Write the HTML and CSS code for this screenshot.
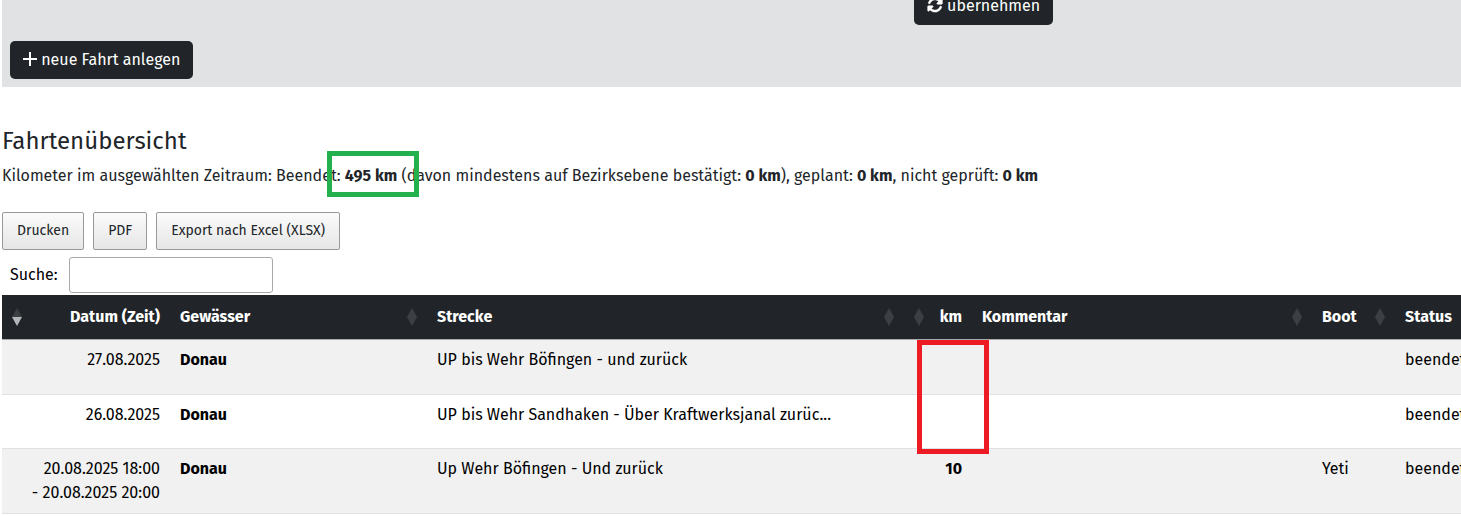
FILE: index.html
```html
<!DOCTYPE html>
<html lang="de">
<head>
	<meta charset="UTF-8">
	<title>Fahrtenübersicht</title>
	<link rel="stylesheet" href="styles.css">
</head>
<body>
<form class="filter" action="#">
	<div class="filter-row">
		<button type="submit" class="btn">
			<svg class="icon" viewBox="0 0 512 512" aria-hidden="true"><path d="M370 142a160 160 0 0 0-266 58 32 32 0 0 1-60-22A224 224 0 0 1 416 97l34-34c15-15 41-4 41 17v128c0 13-11 24-24 24H339c-21 0-32-26-17-41zM142 370a160 160 0 0 0 266-58 32 32 0 0 1 60 22A224 224 0 0 1 96 415l-34 34c-15 15-41 4-41-17V304c0-13 11-24 24-24h128c21 0 32 26 17 41z" stroke="currentColor" stroke-width="16"/></svg>
			übernehmen
		</button>
	</div>
	<div class="filter-new">
		<button type="button" class="btn">
			<svg class="icon icon-plus" viewBox="0 0 14 14" aria-hidden="true"><path d="M6 0h2v6h6v2H8v6H6V8H0V6h6z"/></svg>
			neue Fahrt anlegen
		</button>
	</div>
</form>

<main class="overview">
	<h2>Fahrtenübersicht</h2>
	<p class="summary">
		Kilometer im ausgewählten Zeitraum: Beendet: <b>495 km</b> (davon mindestens auf Bezirksebene bestätigt: <b>0 km</b>), geplant: <b>0 km</b>, nicht geprüft: <b>0 km</b>
		<span class="mark mark-green"></span>
	</p>

	<div class="tools">
		<button type="button">Drucken</button>
		<button type="button">PDF</button>
		<button type="button">Export nach Excel (XLSX)</button>
	</div>
	<div class="search">
		<label for="suche">Suche:</label>
		<input type="search" id="suche">
	</div>

	<table class="trips">
		<colgroup>
			<col class="c-date"><col class="c-water"><col><col class="c-km"><col class="c-comment"><col class="c-boat"><col class="c-status">
		</colgroup>
		<thead>
			<tr>
				<th class="right"><div class="sort"><i class="arrows desc"></i>Datum (Zeit)</div></th>
				<th><div class="sort">Gewässer<i class="arrows"></i></div></th>
				<th><div class="sort">Strecke<i class="arrows"></i></div></th>
				<th class="right"><div class="sort"><i class="arrows"></i>km</div></th>
				<th><div class="sort">Kommentar<i class="arrows"></i></div></th>
				<th><div class="sort">Boot<i class="arrows"></i></div></th>
				<th class="status">Status</th>
			</tr>
		</thead>
		<tbody>
			<tr>
				<td class="right">27.08.2025</td>
				<td><b>Donau</b></td>
				<td>UP bis Wehr Böfingen - und zurück</td>
				<td class="right km"><span class="mark mark-red"></span></td>
				<td></td>
				<td></td>
				<td class="status">beendet</td>
			</tr>
			<tr>
				<td class="right">26.08.2025</td>
				<td><b>Donau</b></td>
				<td>UP bis Wehr Sandhaken - Über Kraftwerksjanal zurüc...</td>
				<td class="right km"></td>
				<td></td>
				<td></td>
				<td class="status">beendet</td>
			</tr>
			<tr>
				<td class="right">20.08.2025 18:00<br>- 20.08.2025 20:00</td>
				<td><b>Donau</b></td>
				<td>Up Wehr Böfingen - Und zurück</td>
				<td class="right km"><b>10</b></td>
				<td></td>
				<td>Yeti</td>
				<td class="status">beendet</td>
			</tr>
		</tbody>
	</table>
</main>
</body>
</html>
```
FILE: styles.css
```css
* {
	box-sizing: border-box;
}
body {
	margin: 0 0 0 2px;
	font-family: "Fira Sans", Roboto, sans-serif;
	font-size: 16px;
	line-height: 24px;
	color: #212529;
	background: #fff;
	overflow: hidden;
}
button, input {
	font-family: inherit;
}

/* Filter */
.filter {
	margin-top: -13px;
	padding-bottom: 8px;
	background: #e1e2e4;
}
.filter-row {
	display: grid;
	grid-template-columns: 5fr 3fr;
	justify-items: start;
}
.filter-row .btn {
	grid-column: 2;
}
.filter-new {
	padding: 16px 8px 0;
}
.btn {
	height: 38px;
	padding: 0 13px;
	border: 0;
	border-radius: 5px;
	background: #212529;
	color: #fff;
	font-size: 16px;
	line-height: 24px;
	white-space: nowrap;
}
.icon {
	width: 16px;
	height: 16px;
	vertical-align: -2px;
	fill: currentColor;
}
.icon-plus {
	width: 14px;
	height: 14px;
	vertical-align: -1px;
}

/* Overview */
h2 {
	margin: 0;
	padding-top: 40px;
	font-size: 24px;
	line-height: 28px;
	font-weight: 400;
}
.summary {
	position: relative;
	margin: 9px 0 24px;
	white-space: nowrap;
}
.tools {
	display: flex;
	gap: 9px;
}
.tools button {
	height: 38px;
	padding: 0 14px 2px;
	border: 1px solid #999;
	border-radius: 2px;
	background: linear-gradient(#fbfbfb, #e6e6e6);
	color: #212529;
	font-size: 14px;
}
.search {
	display: flex;
	align-items: center;
	gap: 11px;
	padding: 7px 8px 2px;
	color: #000;
}
.search input {
	width: 204px;
	height: 36px;
	padding: 5px;
	border: 1px solid #aaa;
	border-radius: 3px;
	background: #fff;
	font-size: 16px;
}

/* Table */
.trips {
	width: 100%;
	table-layout: fixed;
	border-collapse: collapse;
	color: #000;
}
.c-date { width: 168px; }
.c-water { width: 257px; }
.c-km { width: 68px; }
.c-comment { width: 340px; }
.c-boat { width: 83px; }
.c-status { width: 66px; }
th, td {
	padding: 8px 10px;
	text-align: left;
	vertical-align: top;
	white-space: nowrap;
}
th {
	padding-top: 10px;
	padding-bottom: 10px;
	border-bottom: 1px solid #aaa;
	background: #212529;
	color: #fff;
}
td {
	height: 55px;
	border-bottom: 1px solid #dee2e6;
}
tbody tr:nth-child(even) td {
	height: 54px;
}
td.right {
	text-align: right;
}
th.status, td.status {
	padding-right: 0;
}
tbody tr:nth-child(odd) {
	background: #f1f1f1;
}
.km {
	position: relative;
}
.sort {
	display: flex;
	align-items: center;
	justify-content: space-between;
}
.arrows {
	display: grid;
}
.arrows::before, .arrows::after {
	content: "";
	border: 5px solid transparent;
}
.arrows::before {
	border-top: 0;
	border-bottom: 9px solid #3c4044;
}
.arrows::after {
	border-bottom: 0;
	border-top: 9px solid #3c4044;
}
.arrows.desc::after {
	border-top-color: #b5b6b7;
}

/* Markings */
.mark {
	position: absolute;
	border: 5px solid;
}
.mark-green {
	left: 325px;
	top: -13px;
	width: 92px;
	height: 46px;
	border-color: #22b14c;
}
.mark-red {
	left: 13px;
	top: 0;
	width: 72px;
	height: 114px;
	border-color: #ed1c24;
}
```
